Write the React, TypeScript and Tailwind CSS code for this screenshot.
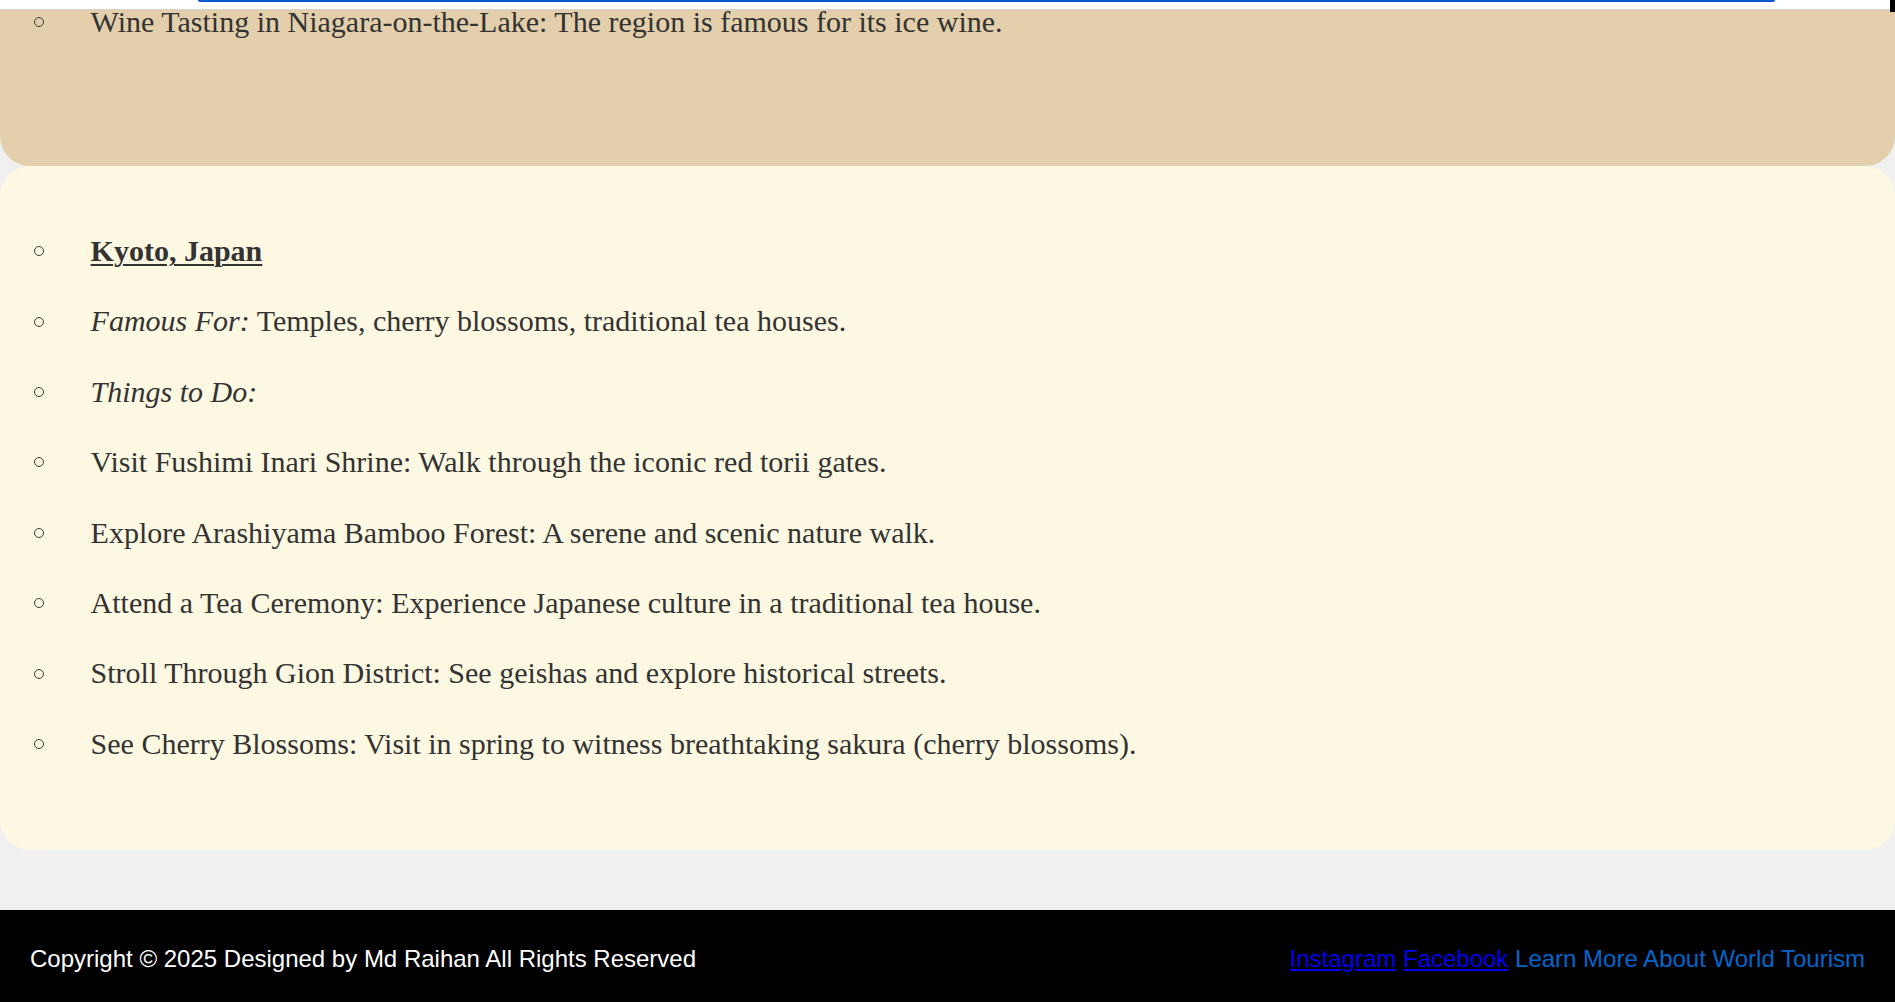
import React from 'react';

const kyotoActivities = [
  'Visit Fushimi Inari Shrine: Walk through the iconic red torii gates.',
  'Explore Arashiyama Bamboo Forest: A serene and scenic nature walk.',
  'Attend a Tea Ceremony: Experience Japanese culture in a traditional tea house.',
  'Stroll Through Gion District: See geishas and explore historical streets.',
  'See Cherry Blossoms: Visit in spring to witness breathtaking sakura (cherry blossoms).',
];

function Item({ children }: { children: React.ReactNode }) {
  return (
    <li className="flex items-center leading-[34.5px]">
      <span className="ml-[34px] mr-[46.6px] h-[10px] w-[10px] shrink-0 rounded-full border-[1.5px] border-[#3a3a3a]" />
      <span>{children}</span>
    </li>
  );
}

export default function App() {
  return (
    <div className="min-h-screen bg-[#f0f0f0] text-[#333] font-['Liberation_Serif','Times_New_Roman',serif]">
      <div className="fixed left-0 right-0 top-0 z-10 h-[10px] border-b border-[#d4d4d4] bg-white">
        <div className="absolute left-[198px] top-0 h-[1.5px] w-[1577px] rounded-b-full bg-[#0b57d0]" />
        <div className="absolute right-0 top-0 h-[12px] w-[5px] bg-black" />
      </div>

      <main className="text-[30px]">
        <section className="rounded-b-[30px] bg-[#e3cfab] pb-[127px] pt-[4.5px]">
          <ul>
            <Item>Wine Tasting in Niagara-on-the-Lake: The region is famous for its ice wine.</Item>
          </ul>
        </section>

        <section className="rounded-[30px] bg-[#fdf8e1] pb-[89px] pt-[68px]">
          <ul className="flex flex-col gap-[35.9px]">
            <Item>
              <span className="font-bold underline decoration-2 underline-offset-[3px]">Kyoto, Japan</span>
            </Item>
            <Item>
              <em>Famous For:</em> Temples, cherry blossoms, traditional tea houses.
            </Item>
            <Item>
              <em>Things to Do:</em>
            </Item>
            {kyotoActivities.map(a => (
              <Item key={a}>{a}</Item>
            ))}
          </ul>
        </section>
      </main>

      <footer className="mt-[60px] flex h-[92px] items-start justify-between bg-black px-[30px] pt-[35px] font-['Liberation_Sans',Arial,sans-serif] text-[24px] leading-[27.6px] text-white">
        <p>Copyright © 2025 Designed by Md Raihan All Rights Reserved</p>
        <p>
          <a href="#" className="text-[#0000ee] underline">Instagram</a>{' '}
          <a href="#" className="text-[#0000ee] underline">Facebook</a>{' '}
          <a href="#" className="text-[#0066cc]">Learn More About World Tourism</a>
        </p>
      </footer>
    </div>
  );
}
